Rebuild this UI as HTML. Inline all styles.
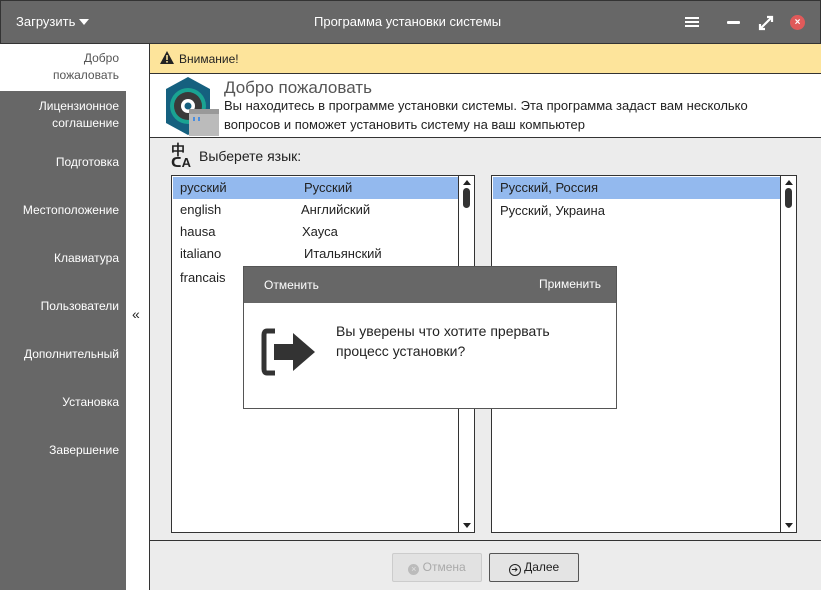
<!DOCTYPE html>
<html><head><meta charset="utf-8"><style>
*{box-sizing:border-box;margin:0;padding:0}
body{width:821px;height:590px;position:relative;overflow:hidden;font-family:"Liberation Sans","DejaVu Sans",sans-serif;background:#ececec;color:#222}
.abs{position:absolute}
#title{left:0;top:0;width:821px;height:44px;background:#676767;border:1px solid #333;color:#fff;font-size:13px}
#side{left:0;top:44px;width:126px;height:546px;background:#676767;color:#fff;font-size:12px;text-align:right}
.si{position:absolute;right:7px;line-height:17px}
#col{left:126px;top:44px;width:24px;height:546px;background:#fff;border-right:1px solid #333}
#warn{left:150px;top:44px;width:671px;height:30px;background:#fde49b;border-bottom:1px solid #333;font-size:12px}
#wel{left:150px;top:74px;width:671px;height:64px;background:#fff;border-bottom:1px solid #333}
.list{background:#fff;border:1px solid #333;font-size:13px}
.row{position:absolute;left:1px;height:22px;line-height:22px}
.sb{position:absolute;right:0;top:0;width:16px;height:100%;border-left:1px solid #333;background:#fff}
#bot{left:150px;top:540px;width:671px;height:50px;border-top:1px solid #333;background:#ececec}
.btn{position:absolute;top:12px;height:29px;border:1px solid #555;border-radius:2px;font-size:12px;line-height:27px;text-align:center}
#dlg{left:243px;top:266px;width:374px;height:143px;background:#fff;border:1px solid #555}
</style></head><body>
<div id="title" class="abs">
 <div class="abs" style="left:15px;top:13px">Загрузить</div>
 <div class="abs" style="left:78px;top:18px;border-left:5px solid transparent;border-right:5px solid transparent;border-top:6px solid #fff"></div>
 <div class="abs" style="left:313px;top:13px">Программа установки системы</div>
 <div class="abs" style="left:684px;top:16px;width:14px;height:2px;background:#fff;box-shadow:0 4px 0 #fff,0 8px 0 #fff"></div>
 <div class="abs" style="left:726px;top:20px;width:13px;height:3px;background:#fff;border-radius:1px"></div>
 <svg class="abs" style="left:757px;top:14px" width="16" height="16"><path d="M2 14L14 2M9 2h5v5M2 9v5h5" stroke="#fff" stroke-width="2.2" fill="none"/></svg>
 <div class="abs" style="left:789px;top:14px;width:15px;height:15px;border-radius:50%;background:#e05a5a;color:#fff;font-size:10px;line-height:15px;text-align:center;font-weight:bold">×</div>
</div>
<div id="side" class="abs">
 <div class="abs" style="left:0;top:0;width:126px;height:47px;background:#fff"></div>
 <div class="si" style="top:6px;color:#555">Добро<br>пожаловать</div>
 <div class="si" style="top:54px">Лицензионное<br>соглашение</div>
 <div class="si" style="top:110px">Подготовка</div>
 <div class="si" style="top:158px">Местоположение</div>
 <div class="si" style="top:206px">Клавиатура</div>
 <div class="si" style="top:254px">Пользователи</div>
 <div class="si" style="top:302px">Дополнительный</div>
 <div class="si" style="top:350px">Установка</div>
 <div class="si" style="top:398px">Завершение</div>
</div>
<div id="col" class="abs"><div class="abs" style="left:6px;top:262px;font-size:14px">«</div></div>
<div id="warn" class="abs">
 <svg class="abs" style="left:10px;top:7px" width="14" height="13"><path d="M7 0L14 13H0Z" fill="#222"/><rect x="6.2" y="4" width="1.6" height="5" fill="#fde49b"/><rect x="6.2" y="10" width="1.6" height="1.6" fill="#fde49b"/></svg>
 <div class="abs" style="left:29px;top:8px">Внимание!</div>
</div>
<div id="wel" class="abs">
 <svg class="abs" style="left:14px;top:1px" width="56" height="62"><path d="M24 2L46 14V48L24 60L2 48V14Z" fill="#15607f"/><circle cx="24" cy="31" r="18" fill="#1aa392"/><circle cx="24" cy="31" r="14" fill="#3a3a3a"/><circle cx="24" cy="31" r="7" fill="#fff"/><circle cx="24" cy="31" r="3.5" fill="#15607f"/><rect x="25" y="34" width="30" height="27" fill="#bbb"/><rect x="25" y="34" width="30" height="5" fill="#999"/><rect x="29" y="42" width="2" height="4" fill="#4a8ee0"/><rect x="34" y="42" width="2" height="4" fill="#4a8ee0"/></svg>
 <div class="abs" style="left:74px;top:4px;font-size:17px;color:#555">Добро пожаловать</div>
 <div class="abs" style="left:74px;top:22px;font-size:13px;line-height:19px;width:560px">Вы находитесь в программе установки системы. Эта программа задаст вам несколько вопросов и поможет установить систему на ваш компьютер</div>
</div>
<div class="abs" style="left:171px;top:144px;font-size:14px;font-weight:bold;line-height:12px">中<br><span style="font-size:13px">ᑕA</span></div>
<div class="abs" style="left:199px;top:148px;font-size:14px">Выберете язык:</div>
<div class="abs list" style="left:171px;top:175px;width:304px;height:358px">
 <div class="row" style="top:1px;width:286px;background:#93b9ee"><span class="abs" style="left:7px">русский</span><span class="abs" style="left:131px">Русский</span></div>
 <div class="row" style="top:23px;width:286px"><span class="abs" style="left:7px">english</span><span class="abs" style="left:128px">Английский</span></div>
 <div class="row" style="top:45px;width:286px"><span class="abs" style="left:7px">hausa</span><span class="abs" style="left:129px">Хауса</span></div>
 <div class="row" style="top:67px;width:286px"><span class="abs" style="left:7px">italiano</span><span class="abs" style="left:131px">Итальянский</span></div>
 <div class="row" style="top:91px;width:286px"><span class="abs" style="left:7px">francais</span></div>
 <div class="sb"><div class="abs" style="left:4px;top:4px;border-left:4px solid transparent;border-right:4px solid transparent;border-bottom:5px solid #222"></div><div class="abs" style="left:4px;top:12px;width:7px;height:20px;border-radius:4px;background:#333"></div><div class="abs" style="left:4px;bottom:4px;border-left:4px solid transparent;border-right:4px solid transparent;border-top:5px solid #222"></div></div>
</div>
<div class="abs list" style="left:491px;top:175px;width:306px;height:358px">
 <div class="row" style="top:1px;width:288px;background:#93b9ee"><span class="abs" style="left:7px">Русский, Россия</span></div>
 <div class="row" style="top:24px;width:288px"><span class="abs" style="left:7px">Русский, Украина</span></div>
 <div class="sb"><div class="abs" style="left:4px;top:4px;border-left:4px solid transparent;border-right:4px solid transparent;border-bottom:5px solid #222"></div><div class="abs" style="left:4px;top:12px;width:7px;height:20px;border-radius:4px;background:#333"></div><div class="abs" style="left:4px;bottom:4px;border-left:4px solid transparent;border-right:4px solid transparent;border-top:5px solid #222"></div></div>
</div>
<div id="bot" class="abs">
 <div class="btn" style="left:242px;width:90px;background:#e2e2e2;border-color:#ccc;color:#aaa"><span style="display:inline-block;width:11px;height:11px;border-radius:50%;background:#bbb;color:#e2e2e2;font-size:9px;line-height:11px;vertical-align:-1px">×</span> Отмена</div>
 <div class="btn" style="left:339px;width:90px;background:#e4e4e4"><span style="display:inline-block;width:12px;height:12px;border-radius:50%;border:1.5px solid #222;font-size:8px;line-height:9px;vertical-align:-1px;font-weight:bold">➔</span> Далее</div>
</div>
<div id="dlg" class="abs">
 <div class="abs" style="left:0;top:0;width:372px;height:36px;background:#676767;color:#fff;font-size:12px">
  <span class="abs" style="left:20px;top:11px">Отменить</span><span class="abs" style="right:15px;top:10px">Применить</span></div>
 <svg class="abs" style="left:17px;top:60px" width="60" height="50"><path d="M14 4H6Q3 4 3 8V42Q3 46 6 46H14" stroke="#333" stroke-width="5" fill="none"/><path d="M13 17H32V6L54 25L32 44V33H13Z" fill="#333"/></svg>
 <div class="abs" style="left:92px;top:54px;font-size:14px;line-height:20px">Вы уверены что хотите прервать<br>процесс установки?</div>
</div>
</body></html>
